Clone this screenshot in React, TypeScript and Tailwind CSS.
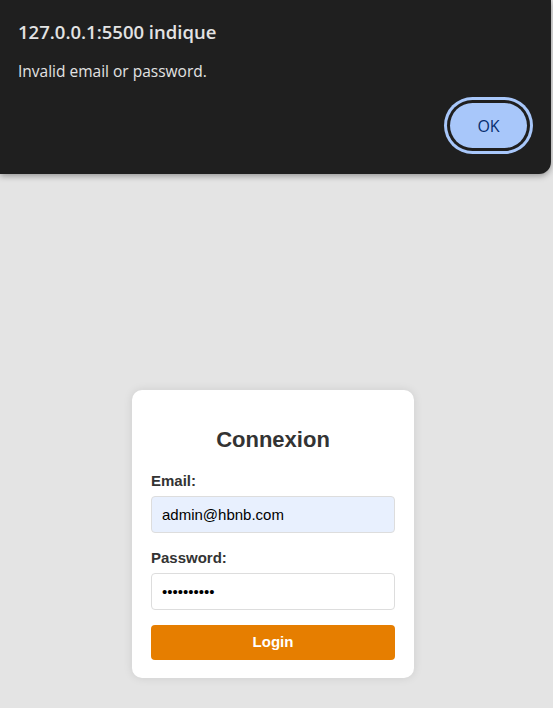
export default function App() {
  return (
    <div className="relative min-h-[708px] w-full bg-[#e4e4e4] font-['Liberation_Sans',Arial,sans-serif]">
      {/* browser alert */}
      <div className="absolute left-0 top-0 z-10 w-[551px] h-[174px] rounded-br-[12px] bg-[#1f1f1f] px-[18px] pt-[19px] shadow-[0_2px_6px_rgba(0,0,0,0.35)] font-['Open_Sans','Noto_Sans',sans-serif]">
        <h1 className="text-[18.5px] leading-[26px] font-semibold text-[#e3e3e3]">127.0.0.1:5500 indique</h1>
        <p className="mt-[16px] text-[15.5px] leading-[20px] text-[#e3e3e3]">Invalid email or password.</p>
        <div className="mt-[22px] flex justify-end pr-[6px]">
          <button className="flex h-[45px] w-[77px] items-center justify-center rounded-full bg-[#a8c7fa] text-[16px] font-medium text-[#062e6f] shadow-[0_0_0_3px_#1f1f1f,0_0_0_6px_#a8c7fa]">
            OK
          </button>
        </div>
      </div>

      <div className="flex justify-center pt-[390px] pb-[30px] pr-[7px]">
        <div className="w-[282px] rounded-[10px] bg-white px-[19px] pt-[37px] pb-[18px] shadow-[0_0_10px_rgba(0,0,0,0.1)]">
          <h2 className="mb-[19px] text-center text-[22px] leading-[26px] font-bold text-[#333]">Connexion</h2>

          <label className="mb-[6px] block text-[15px] leading-[18px] font-bold text-[#333]">Email:</label>
          <input
            type="email"
            defaultValue="admin@hbnb.com"
            className="block h-[37px] w-full rounded-[4px] border border-[#ddd] bg-[#e8f0fe] px-[10px] text-[15px] text-black outline-none"
          />

          <label className="mt-[16px] mb-[6px] block text-[15px] leading-[18px] font-bold text-[#333]">Password:</label>
          <input
            type="password"
            defaultValue="0123456789"
            className="block h-[37px] w-full rounded-[4px] border border-[#ddd] bg-white px-[10px] text-[15px] text-black outline-none"
          />

          <button className="mt-[15px] h-[35px] w-full rounded-[4px] bg-[#e67e00] text-[15px] font-bold text-white">
            Login
          </button>
        </div>
      </div>
    </div>
  )
}
